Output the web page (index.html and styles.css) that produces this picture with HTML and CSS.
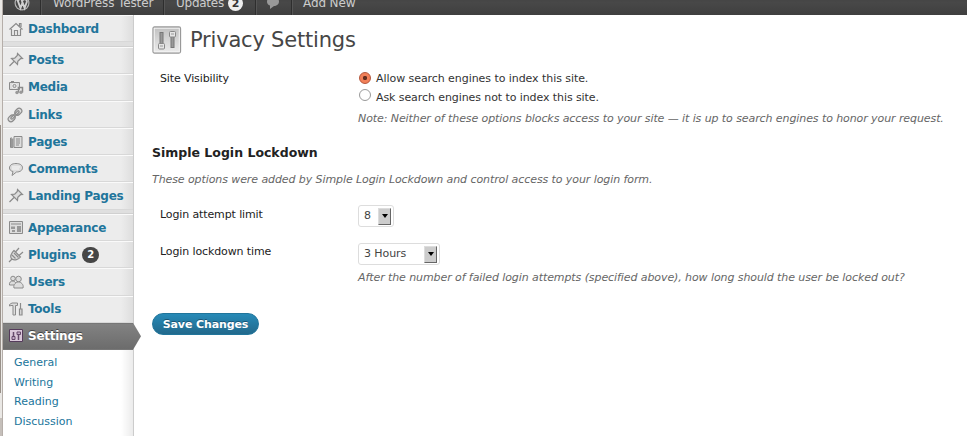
FILE: index.html
```html
<!DOCTYPE html>
<html lang="en">
<head>
<meta charset="utf-8">
<title>Privacy Settings</title>
<link rel="stylesheet" href="styles.css">
</head>
<body>
<div class="edge"><i></i><i></i><i></i></div>
<div class="app">
  <header class="bar">
    <div class="bar-item logo"><svg width="16" height="16" viewBox="0 0 16 16"><circle cx="8" cy="8" r="7.500" fill="#b4b4b4"/><circle cx="8" cy="8" r="6.300" fill="#484848"/><path d="M2.500 4.800h3M7 4.800h3.300M3.500 5l3 8L8.400 7.800M7.600 5l3 8 2.200-6c.4-1.600-1.300-2-.8-3.400" fill="none" stroke="#d0d0d0" stroke-width="1.900"/></svg></div>
    <div class="bar-item site">WordPress Tester</div>
    <div class="bar-item updates">Updates <b>2</b></div>
    <div class="bar-item bubble"><svg width="14" height="14" viewBox="0 0 14 14"><path d="M7 1c3.500 0 6 1.700 6 4.500S10.500 10 8 10l-4 3V9.500C2 9 1 7.500 1 5.500 1 2.700 3.500 1 7 1z" fill="#999"/></svg></div>
    <div class="bar-item add">Add New</div>
  </header>
  <div class="columns">
    <nav class="menu">
      <a class="item first"><svg viewBox="0 0 16 16"><path d="M3 8v6.500h10V8L8 3z" fill="#eee"/><path d="M1.500 8.500L8 2.500l6.500 6M3.500 8v6.500h9V8M11.500 5V2.500h1.500V6M6.500 14V9.500h3V14" class="l bold"/></svg>Dashboard</a>
      <div class="sep"></div>
      <a class="item"><svg viewBox="0 0 16 16"><path d="M9.500 1.500l5 5-2 .2-2.700 2.600-.3 3.200-6-6 3.200-.3L9.300 3.500zM6 9.500L1.500 14" class="l g bold"/></svg>Posts</a>
      <a class="item"><svg viewBox="0 0 16 16"><path d="M1.500 3.500h10v7h-10zM3 2.500h3" class="l g"/><circle cx="6.500" cy="7" r="2.300" class="l pale"/><circle cx="6.500" cy="7" r="1.600" class="l"/><path d="M10.500 13.500V8.500h4v5" class="l thick"/><circle cx="13" cy="13.300" r="1.700" class="s"/><circle cx="9" cy="13.500" r="1.700" class="s"/></svg>Media</a>
      <a class="item links"><svg viewBox="0 0 16 16"><g transform="rotate(-45 8 8)" class="l bold"><rect x="-.5" y="5.300" width="7.500" height="5.400" rx="2.700" class="g"/><rect x="9" y="5.300" width="7.500" height="5.400" rx="2.700" class="g"/><rect x="2.500" y="7" width="11" height="2" rx="1"/></g></svg>Links</a>
      <a class="item"><svg viewBox="0 0 16 16"><path d="M4 4H2.500v9.500H5M6 2.500h8v11H6zM8 5h4M8 7h4M8 9h4M8 11h3" class="l g"/><path d="M3 4.500h2.500v9H3z" class="s"/></svg>Pages</a>
      <a class="item"><svg viewBox="0 0 16 16"><path d="M8 2.500c4 0 6.500 1.700 6.500 4.300S12 11 8.500 11L4 14.500l1-4C2.500 10 1.500 8.500 1.500 7 1.500 4.200 4 2.500 8 2.500z" class="l g"/><path d="M4 6h8M4 8h7" class="l pale"/></svg>Comments</a>
      <a class="item last"><svg viewBox="0 0 16 16"><path d="M9.500 1.500l5 5-2 .2-2.700 2.600-.3 3.200-6-6 3.200-.3L9.300 3.500zM6 9.500L1.500 14" class="l g bold"/></svg>Landing Pages</a>
      <div class="sep"></div>
      <a class="item"><svg viewBox="0 0 16 16"><path d="M1.500 1.500h13v12h-13z" class="l g"/><path d="M3 4h10" class="l"/><path d="M3 6.500h4v2.500H3zM4 10h3v2H4zM9 6h4v6H9z" class="s"/></svg>Appearance</a>
      <a class="item"><svg viewBox="0 0 16 16"><path d="M6 3.500L12.500 10c-2 2.500-6 4-8.500 2S3 6.500 6 3.500zM7.500 5L11 1M11 8.500l4-3.500M4 12l-3 3M6 6l4.500 4.500M4 8l3.500 3.500" class="l g bold"/></svg>Plugins<b class="count">2</b></a>
      <a class="item"><svg viewBox="0 0 16 16"><circle cx="5" cy="4.500" r="2.300" class="l g"/><path d="M1.500 11c-.5-2.500 1-4 3.500-4 2 0 3 2 3 4z" class="l g"/><circle cx="10.500" cy="5" r="2.800" class="l g"/><path d="M6 14c-1-3.500 2-6 4.500-6s5.500 2.500 4.500 6z" class="l g"/></svg>Users</a>
      <a class="item"><svg viewBox="0 0 16 16"><path d="M1.500 5V3.500L4 2h5.500v2.500H7.500V14h-2.500V4.500H3z" class="l g"/><path d="M12.500 2v6M11.500 8h2.500v6h-2.500z" class="l g bold"/></svg>Tools</a>
      <a class="item current"><svg viewBox="0 0 16 16"><path d="M1.500 1.500h13v12h-13z" fill="#dac8da" stroke="#553c5b"/><path d="M5.500 4v5M10.500 6v6" stroke="#65496b" stroke-width="1.500"/><path d="M4 8.500h3v3H4zM9 4h3.500v2.500H9z" fill="#c4abc7" stroke="#65496b"/></svg>Settings</a>
      <div class="submenu"><a>General</a><a>Writing</a><a>Reading</a><a>Discussion</a></div>
    </nav>
    <main>
      <div class="heading"><svg width="30" height="29" viewBox="0 0 30 29"><defs><linearGradient id="tile" x1="0" y1="0" x2="0" y2="1"><stop stop-color="#c0c0c0"/><stop offset="1" stop-color="#ececec"/></linearGradient></defs><rect x="1" y="1" width="27.500" height="26" rx="1.500" fill="url(#tile)" stroke="#999" stroke-width="1.300"/><rect x="2.200" y="2.200" width="25.100" height="23.600" fill="none" stroke="#f4f4f4"/><path d="M9.500 6v12M20.500 10v12" stroke="#777" stroke-width="4"/><path d="M9.500 7v10M20.500 11v10" stroke="#999" stroke-width="2"/><rect x="6.500" y="17.500" width="6" height="5.500" rx="1" fill="#e5e5e5" stroke="#888"/><rect x="17.500" y="5.500" width="6" height="5.500" rx="1" fill="#e5e5e5" stroke="#888"/><path d="M8 20h3M19 8h3" stroke="#999"/></svg><h1>Privacy Settings</h1></div>
      <div class="row visibility">
        <div class="label">Site Visibility</div>
        <div class="field">
          <div class="choice"><i class="radio on"></i><span>Allow search engines to index this site.</span></div>
          <div class="choice second"><i class="radio"></i><span>Ask search engines not to index this site.</span></div>
          <p class="note">Note: Neither of these options blocks access to your site — it is up to search engines to honor your request.</p>
        </div>
      </div>
      <h2>Simple Login Lockdown</h2>
      <p class="intro">These options were added by Simple Login Lockdown and control access to your login form.</p>
      <div class="row limit"><div class="label">Login attempt limit</div><div class="select small">8<i class="arrow"></i></div></div>
      <div class="row time"><div class="label">Login lockdown time</div><div class="field"><div class="select">3 Hours<i class="arrow"></i></div><p class="after">After the number of failed login attempts (specified above), how long should the user be locked out?</p></div></div>
      <button class="save">Save Changes</button>
    </main>
  </div>
</div>
</body>
</html>
```
FILE: styles.css
```css
* { box-sizing: border-box; }
body { margin: 0; width: 967px; height: 436px; overflow: hidden; display: flex; background: #fff; font: 11px/16px "DejaVu Sans", sans-serif; letter-spacing: -.085px; color: #333; }
h1, h2, p { margin: 0; font-weight: normal; }
.edge { width: 3px; height: 436px; background: #eae8e5; border-right: 1px solid #b5aea9; display: flex; flex-direction: column; flex: none; }
.edge i { flex: none; }
.edge i:nth-child(1) { height: 125px; }
.edge i:nth-child(2) { height: 268px; width: 1px; background: #989089; }
.edge i:nth-child(3) { margin-top: 25px; height: 18px; background: #c5bfba; width: 2px; }
.app { width: 964px; height: 436px; overflow: hidden; }
.bar { height: 28px; margin-top: -13px; display: flex; background: linear-gradient(#464646 50%, #484848 55%, #3f3f3f); color: #ccc; font-size: 12px; line-height: 33px; letter-spacing: -.12px; white-space: nowrap; }
.bar-item { border-right: 1px solid #2e2e2e; box-shadow: 1px 0 #555; height: 28px; padding-left: 12px; }
.logo { width: 38px; padding: 8px 0 0 11px; line-height: 0; }
.site { width: 123px; }
.updates { width: 92px; display: flex; gap: 4px; padding-left: 12px; letter-spacing: -.25px; }
.updates b { width: 15px; height: 15px; border-radius: 8px; background: #eee; color: #333; font-size: 11px; line-height: 15px; text-align: center; margin-top: 9px; }
.bubble { width: 36px; padding: 9px 0 0 10px; line-height: 0; }
.add { border: 0; box-shadow: none; padding-left: 11px; }
.columns { display: flex; height: 421px; }
.menu { width: 131px; flex: none; border-right: 1px solid #ccc; background: linear-gradient(90deg, transparent 118px, rgba(0,0,0,.08)) #fff; }
.item { display: flex; align-items: center; height: 27.150px; padding-left: 5px; border-top: 1px solid #fafafa; border-bottom: 1px solid #d8d8d8; background: linear-gradient(90deg, #ececec 118px, #dedede); color: #21759b; font-size: 12px; font-weight: bold; letter-spacing: -.25px; white-space: nowrap; }
.item svg { width: 16px; height: 16px; margin-right: 4px; flex: none; }
.links svg { margin-left: -1px; margin-right: 5px; }
.sep { height: 4.600px; background: #dfdfdf; border-bottom: 1px solid #d0d0d0; }
.count { width: 17px; height: 16px; border-radius: 8px; background: #464646; color: #fff; font-size: 10px; line-height: 16px; text-align: center; margin-left: 6px; }
.current { position: relative; background: linear-gradient(#828282, #6c6c6c); border-color: #777; color: #fff; text-shadow: 0 -1px #444; }
.current::after { content: ""; position: absolute; left: 130px; top: -1px; width: 8px; height: 27px; background: linear-gradient(#828282, #6c6c6c); clip-path: polygon(0 0, 100% 50%, 0 100%); }
.submenu { padding: 3px 0 0 11px; color: #21759b; line-height: 19.700px; letter-spacing: 0; }
.submenu a { display: block; }
.l { fill: none; stroke: #8b8b8b; stroke-width: 1; }
.g { fill: #ddd; }
.pale { stroke: #f8f8f8; }
.thick { stroke-width: 1.500; }
.bold { stroke-width: 1.200; }
.s { fill: #999; }
main { padding-left: 18px; width: 833px; white-space: nowrap; }
.heading { height: 52px; display: flex; padding-top: 11px; }
h1 { margin-left: 8px; font-size: 21px; line-height: 28px; letter-spacing: -.2px; color: #464646; }
.row { display: flex; padding-left: 8px; }
.label { width: 198px; color: #222; padding-top: 1px; letter-spacing: -.12px; }
.visibility { height: 77px; padding-top: 3px; }
.choice { display: flex; height: 17px; align-items: center; }
.radio { width: 12px; height: 12px; margin: -2px 5px 0 1px; border: 1px solid #999; border-radius: 50%; background: #fff; }
.radio.on { border-color: #b5553a; background: radial-gradient(circle, #642f20 0 1.800px, #f28058 2.500px); }
.choice:first-child span { letter-spacing: -.06px; }
.second { height: 21px; }
.second .radio { margin-top: -5px; }
.note, .intro, .after { color: #666; font-style: italic; }
.note { margin-top: 3px; }
h2 { font-size: 12.500px; font-weight: bold; line-height: 18px; letter-spacing: 0; color: #222; }
.intro { margin-top: 10px; }
.limit { height: 38px; margin-top: 17px; }
.limit .label { padding-top: 2px; }
.select { display: flex; align-items: center; justify-content: space-between; width: 82px; height: 22px; padding: 0 2px 0 5px; border: 1px solid #ddd; border-radius: 3px; color: #444; }
.select.small { width: 36px; }
.arrow { width: 13px; height: 17px; background: #ccc; border: 1px solid #ddd; border-right-color: #666; border-bottom-color: #666; display: grid; place-items: center; }
.arrow::after { content: ""; border: 3px solid transparent; border-top: 4px solid #000; border-bottom: 0; }
.after { margin-top: 5px; }
.save { display: block; width: 107px; height: 22px; margin-top: 27px; padding: 1px 0 0; border: 1px solid #21759b; border-radius: 11px; background: linear-gradient(#278ab7, #22698c); color: #fff; font: bold 11px/19px "DejaVu Sans", sans-serif; letter-spacing: -.1px; text-shadow: 0 -1px #195575; }
```
